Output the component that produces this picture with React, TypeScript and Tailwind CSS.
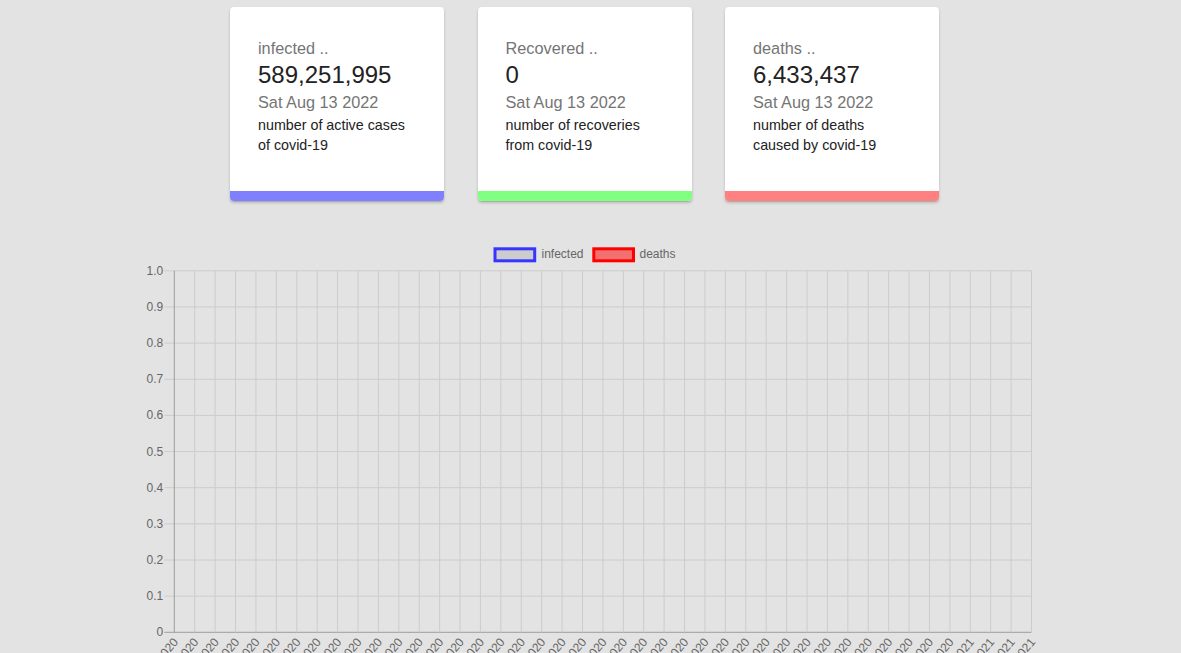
import React from "react";

type Stat = {
  title: string;
  value: string;
  text: string;
  bar: string;
};

const stats: Stat[] = [
  { title: "infected ..", value: "589,251,995", text: "number of active cases of covid-19", bar: "bg-[#8080ff]" },
  { title: "Recovered ..", value: "0", text: "number of recoveries from covid-19", bar: "bg-[#80ff80]" },
  { title: "deaths ..", value: "6,433,437", text: "number of deaths caused by covid-19", bar: "bg-[#ff8080]" },
];

const StatCard: React.FC<{ stat: Stat }> = ({ stat }) => (
  <div className="w-[214px] h-[194px] bg-white rounded-[4px] overflow-hidden flex flex-col shadow-[0_2px_3px_rgba(0,0,0,0.18),0_1px_1px_rgba(0,0,0,0.1)]">
    <div className="flex-1 pt-[29px] px-[28px]">
      <p className="text-[16.3px] leading-[24px] text-[#757575]">{stat.title}</p>
      <p className="text-[24px] leading-[30px] text-[#222]">{stat.value}</p>
      <p className="text-[16.3px] leading-[25px] text-[#757575]">Sat Aug 13 2022</p>
      <p className="w-[152px] text-[14.3px] leading-[20px] text-[#222]">{stat.text}</p>
    </div>
    <div className={`h-[10px] ${stat.bar}`} />
  </div>
);

// chart geometry, in svg coords (svg starts at page x=130, y=240)
const X0 = 43.3;
const STEP = 20.41;
const COLS = 42;
const Y_TOP = 30.8;
const Y_BOT = 392.3;

const labels = (() => {
  const out: string[] = [];
  const d = new Date(2020, 3, 4);
  for (let i = 0; i <= COLS; i++) {
    out.push(`${d.getMonth() + 1}/${d.getDate()}/${d.getFullYear()}`);
    d.setDate(d.getDate() + 7);
  }
  return out;
})();

const Chart: React.FC = () => {
  const right = X0 + STEP * COLS;
  const rowH = (Y_BOT - Y_TOP) / 10;
  return (
    <svg width={920} height={413} className="block mx-auto" style={{ fontFamily: '"Liberation Sans", Arial, sans-serif' }}>
      {/* legend */}
      <rect x={364} y={8.8} width={39.7} height={12} fill="#cccccc" stroke="#3535ff" strokeWidth={3} />
      <text x={410.5} y={18} fontSize={12} fill="#666">infected</text>
      <rect x={462.8} y={8.8} width={39.7} height={12} fill="#f17171" stroke="#ff0000" strokeWidth={3} />
      <text x={508.5} y={18} fontSize={12} fill="#666">deaths</text>

      {/* horizontal grid */}
      {Array.from({ length: 11 }).map((_, i) => {
        const y = Y_TOP + rowH * i;
        const v = (1 - i / 10).toFixed(1);
        return (
          <g key={`h${i}`}>
            <line x1={X0 - 10} x2={right} y1={y} y2={y} stroke={i === 10 ? "#9d9d9d" : "#cccccc"} strokeWidth={1} />
            <text x={X0 - 11} y={y + 4} fontSize={12} fill="#666" textAnchor="end">
              {i === 10 ? "0" : v}
            </text>
          </g>
        );
      })}

      {/* vertical grid + x labels */}
      {labels.map((l, i) => {
        const x = X0 + STEP * i;
        return (
          <g key={`v${i}`}>
            <line x1={x} x2={x} y1={Y_TOP} y2={Y_BOT} stroke={i === 0 ? "#9d9d9d" : "#cccccc"} strokeWidth={1} />
            <text
              transform={`translate(${x + 2} ${Y_BOT + 8}) rotate(-50)`}
              fontSize={12}
              fill="#666"
              textAnchor="end"
              dominantBaseline="middle"
            >
              {l}
            </text>
          </g>
        );
      })}
    </svg>
  );
};

export default function App() {
  return (
    <div className="h-[653px] overflow-hidden bg-[#e3e3e3]" style={{ fontFamily: '"Liberation Sans", Arial, sans-serif' }}>
      <div className="flex justify-center gap-[33.5px] pr-[12px] pt-[7px]">
        {stats.map((s) => (
          <StatCard key={s.title} stat={s} />
        ))}
      </div>
      <div className="mt-[39px]">
        <Chart />
      </div>
    </div>
  );
}
